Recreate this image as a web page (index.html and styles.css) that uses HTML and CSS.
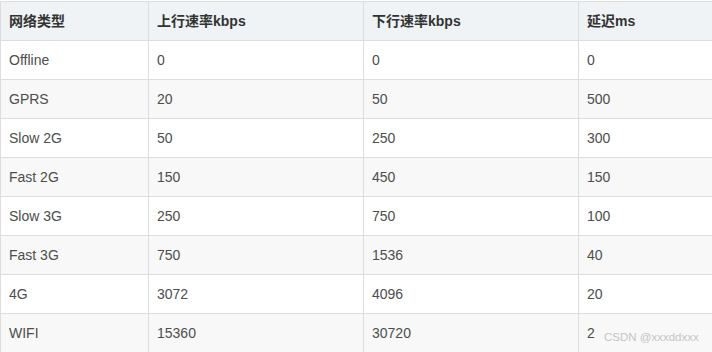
FILE: index.html
```html
<!DOCTYPE html>
<html lang="zh">
<head>
<meta charset="utf-8">
<link rel="stylesheet" href="styles.css">
</head>
<body>
<div class="wrap">
<table class="net">
  <colgroup>
    <col class="c1"><col class="c2"><col class="c3"><col class="c4">
  </colgroup>
  <thead>
    <tr><th>网络类型</th><th>上行速率kbps</th><th>下行速率kbps</th><th>延迟ms</th></tr>
  </thead>
  <tbody>
    <tr><td>Offline</td><td>0</td><td>0</td><td>0</td></tr>
    <tr><td>GPRS</td><td>20</td><td>50</td><td>500</td></tr>
    <tr><td>Slow 2G</td><td>50</td><td>250</td><td>300</td></tr>
    <tr><td>Fast 2G</td><td>150</td><td>450</td><td>150</td></tr>
    <tr><td>Slow 3G</td><td>250</td><td>750</td><td>100</td></tr>
    <tr><td>Fast 3G</td><td>750</td><td>1536</td><td>40</td></tr>
    <tr><td>4G</td><td>3072</td><td>4096</td><td>20</td></tr>
    <tr><td>WIFI</td><td>15360</td><td>30720</td><td>2</td></tr>
  </tbody>
</table>
<span class="watermark">CSDN @xxxddxxx</span>
</div>
</body>
</html>
```
FILE: styles.css
```css
html, body {
  margin: 0;
  padding: 0;
  background: #fff;
}
.wrap {
  position: relative;
  width: 712px;
  height: 352px;
  overflow: hidden;
  padding-top: 1px;
  box-sizing: border-box;
}
.net {
  border-collapse: collapse;
  table-layout: fixed;
  width: 712px;
  font-family: "Liberation Sans", "Noto Sans CJK SC", sans-serif;
  font-size: 14px;
  color: #4d4d4d;
}
.c1 { width: 148px; }
.c2 { width: 215px; }
.c3 { width: 215px; }
.c4 { width: 134px; }
.net th, .net td {
  border: 1px solid #ddd;
  padding: 0 8px;
  height: 38px;
  box-sizing: border-box;
  text-align: left;
  vertical-align: middle;
  line-height: 20px;
}
.net th {
  background: #eff3f5;
  font-weight: bold;
  color: #333;
  height: 39px;
}
.net tbody tr:nth-child(even) td {
  background: #f8f8f8;
}
.net tbody tr { height: 39px; }
.watermark {
  position: absolute;
  left: 604px;
  top: 331px;
  font-family: "Liberation Sans", "Noto Sans CJK SC", sans-serif;
  font-size: 11.5px;
  color: #c4c4c4;
  white-space: nowrap;
}
```
